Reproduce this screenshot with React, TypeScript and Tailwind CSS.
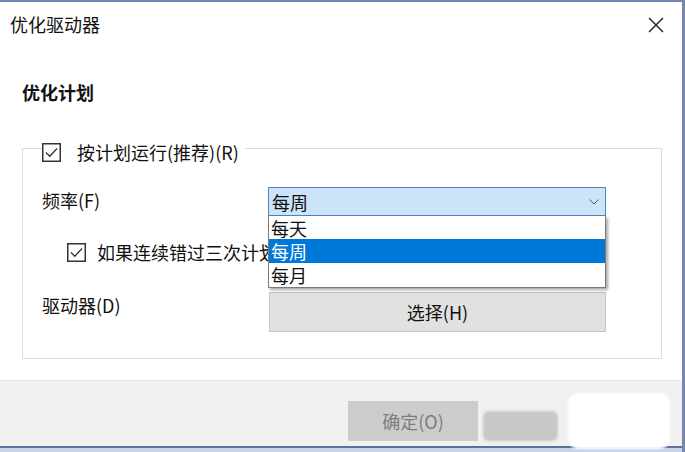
import React from "react";

const font = { fontFamily: '"Noto Sans CJK SC", "Noto Sans", sans-serif' };

function CheckBox() {
  return (
    <svg width="19" height="19" viewBox="0 0 19 19" className="shrink-0">
      <rect x="0.75" y="0.75" width="17.5" height="17.5" fill="white" stroke="#333" strokeWidth="1.5" />
      <polyline points="4,9.5 7.8,13.2 15,5.5" fill="none" stroke="#333" strokeWidth="1.3" />
    </svg>
  );
}

export default function App() {
  return (
    <div
      className="w-[685px] h-[452px] bg-white flex flex-col overflow-hidden border-t-2 border-r-[3px] border-[#7688b0] text-[18px] text-[#111] leading-[24px]"
      style={font}
    >
      {/* title bar */}
      <div className="h-[44px] shrink-0 flex items-center justify-between pl-[10px] pr-[18px]">
        <span>优化驱动器</span>
        <svg width="16" height="16" viewBox="0 0 16 16" className="mt-[2px]">
          <line x1="1" y1="1" x2="15" y2="15" stroke="#222" strokeWidth="1.4" />
          <line x1="15" y1="1" x2="1" y2="15" stroke="#222" strokeWidth="1.4" />
        </svg>
      </div>

      <div className="flex-1 flex flex-col pl-[22px] pr-[20px]">
        <div className="mt-[34px] font-bold">优化计划</div>

        {/* group box */}
        <div className="mt-[44px] border border-[#dcdcdc] pl-[19px] pr-[55px] pb-[26px]">
          <div className="-mt-[9px] flex items-center">
            <div className="bg-white flex items-center gap-[16px] pr-[6px]">
              <CheckBox />
              <span>按计划运行(推荐)(R)</span>
            </div>
          </div>

          <div className="mt-[23px] flex items-center">
            <div className="w-[226px] shrink-0 -mt-[4px]">频率(F)</div>
            <div className="relative flex-1">
              <div className="h-[29px] bg-[#cce4f7] border border-[#4a86c0] flex items-center justify-between pl-[3px] pr-[6px]">
                <span>每周</span>
                <svg width="10" height="6" viewBox="0 0 10 6">
                  <polyline points="0.5,0.5 5,5 9.5,0.5" fill="none" stroke="#555" strokeWidth="1" />
                </svg>
              </div>
              <div className="absolute left-0 right-0 top-full z-10 bg-white border border-[#7a7a7a] border-t-0 shadow-[2px_2px_3px_rgba(0,0,0,0.35)] flex flex-col">
                <div className="h-[23px] flex items-center pl-[2px]">每天</div>
                <div className="h-[24px] flex items-center pl-[2px] bg-[#0078d7] text-white">每周</div>
                <div className="h-[24px] flex items-center pl-[2px]">每月</div>
              </div>
            </div>
          </div>

          <div className="mt-[24px] h-[24px] flex items-center gap-[11px] pl-[25px] whitespace-nowrap">
            <CheckBox />
            <span>如果连续错过三次计划运行，则增加优先级(I)</span>
          </div>

          <div className="mt-[28px] flex items-start">
            <div className="w-[227px] shrink-0 mt-[1px]">驱动器(D)</div>
            <div className="flex-1 h-[40px] bg-[#e1e1e1] border border-[#c4c4c4] flex items-center justify-center">
              选择(H)
            </div>
          </div>
        </div>
      </div>

      {/* footer */}
      <div className="h-[66px] shrink-0 bg-[#f0f0f0] border-t border-[#e6e6e6] flex items-start pl-[348px] pt-[20px]">
        <div className="w-[130px] h-[40px] bg-[#cccccc] flex items-center justify-center text-[#7d7d7d]">
          确定(O)
        </div>
        <div className="ml-[5px] mt-[10px] w-[75px] h-[30px] bg-[#c8c8c8] rounded-[6px] blur-[1px]" />
        <div className="ml-[10px] -mt-[8px] w-[102px] h-[56px] bg-white rounded-[10px] blur-[1px]" />
      </div>
      <div className="h-[2px] shrink-0 bg-[#5d6f9c]" />
      <div className="h-[4px] shrink-0 bg-[#c9d4ea]" />
    </div>
  );
}
